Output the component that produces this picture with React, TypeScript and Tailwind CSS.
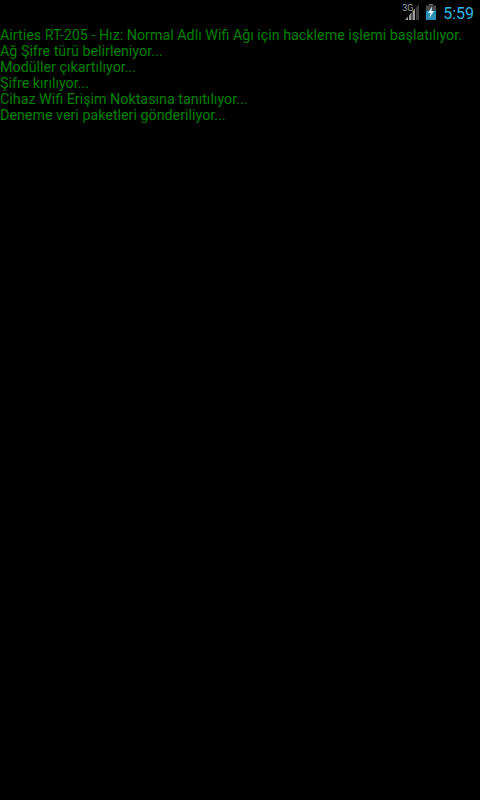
const LINES = [
  'Airties RT-205 - Hız: Normal Adlı Wifi Ağı için hackleme işlemi başlatılıyor.',
  'Ağ Şifre türü belirleniyor...',
  'Modüller çıkartılıyor...',
  'Şifre kırılıyor...',
  'Cihaz Wifi Erişim Noktasına tanıtılıyor...',
  'Deneme veri paketleri gönderiliyor...',
];

function Signal() {
  return (
    <svg width="14" height="16" viewBox="0 0 14 16">
      <polygon points="0,16 3,12.5 3,16" fill="#9a9a9a" />
      <polygon points="4,16 4,11.5 6.5,8.5 6.5,16" fill="#9a9a9a" />
      <polygon points="7.5,16 7.5,7.5 10,4.5 10,16" fill="#9a9a9a" />
      <polygon points="11,16 11,3.5 14,0 14,16" fill="#3c3c3c" />
    </svg>
  );
}

function Battery() {
  return (
    <svg width="10" height="16" viewBox="0 0 10 16">
      <rect x="3" y="0" width="4" height="1.5" fill="#6a6a6a" />
      <rect x="0" y="1.5" width="10" height="5" fill="#4a4a4a" />
      <rect x="0" y="6.5" width="10" height="9.5" fill="#2a8fb5" />
      <polygon points="6,2.5 2,9 4.5,9 3.5,14 8,7 5.5,7" fill="#dff3fa" />
    </svg>
  );
}

export default function App() {
  return (
    <div className="min-h-[800px] bg-black font-['Roboto',sans-serif]">
      <div className="flex h-[27px] items-start justify-end pr-[6px]">
        <div className="relative mr-[7px] mt-[4px] flex h-[16px] w-[17px] justify-end">
          <span className="absolute left-0 top-0 text-[9px] leading-[9px] text-[#a0a0a0]">3G</span>
          <Signal />
        </div>
        <div className="mr-[7px] mt-[4px]">
          <Battery />
        </div>
        <span className="text-[16px] leading-[27px] text-[#33b5e5]">5:59</span>
      </div>
      <div className="text-[14.3px] leading-[16px] text-[#008000]">
        {LINES.map((line) => (
          <div key={line}>{line}</div>
        ))}
      </div>
    </div>
  );
}
